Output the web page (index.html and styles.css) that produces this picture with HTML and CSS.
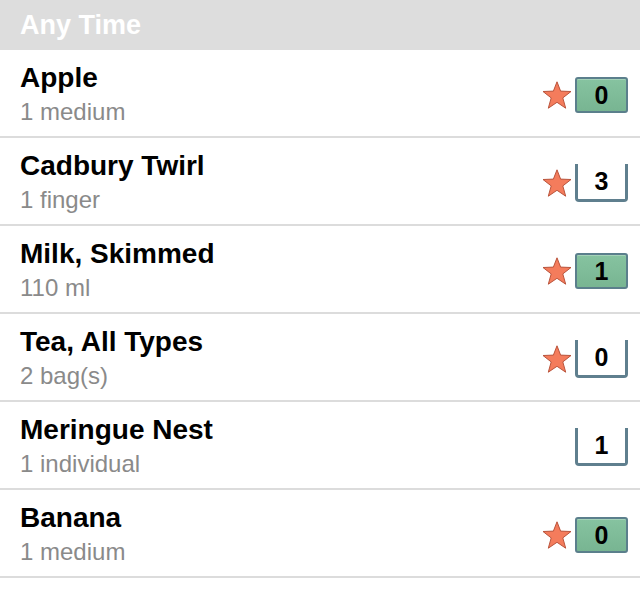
FILE: index.html
```html
<!DOCTYPE html>
<html>
<head>
<meta charset="utf-8">
<link rel="stylesheet" href="styles.css">
</head>
<body>
<div class="list">
  <div class="header">Any Time</div>

  <div class="row">
    <div class="info"><div class="title">Apple</div><div class="sub">1 medium</div></div>
    <div class="controls">
      <svg class="star" viewBox="0 0 30 28"><polygon points="15,0.8 18.6,10.1 29,10.5 20.8,16.9 23.7,27.2 15,21.3 6.3,27.2 9.2,16.9 1,10.5 11.4,10.1"/></svg>
      <div class="box filled">0</div>
    </div>
  </div>

  <div class="row">
    <div class="info"><div class="title">Cadbury Twirl</div><div class="sub">1 finger</div></div>
    <div class="controls">
      <svg class="star" viewBox="0 0 30 28"><polygon points="15,0.8 18.6,10.1 29,10.5 20.8,16.9 23.7,27.2 15,21.3 6.3,27.2 9.2,16.9 1,10.5 11.4,10.1"/></svg>
      <div class="box empty">3</div>
    </div>
  </div>

  <div class="row">
    <div class="info"><div class="title">Milk, Skimmed</div><div class="sub">110 ml</div></div>
    <div class="controls">
      <svg class="star" viewBox="0 0 30 28"><polygon points="15,0.8 18.6,10.1 29,10.5 20.8,16.9 23.7,27.2 15,21.3 6.3,27.2 9.2,16.9 1,10.5 11.4,10.1"/></svg>
      <div class="box filled">1</div>
    </div>
  </div>

  <div class="row">
    <div class="info"><div class="title">Tea, All Types</div><div class="sub">2 bag(s)</div></div>
    <div class="controls">
      <svg class="star" viewBox="0 0 30 28"><polygon points="15,0.8 18.6,10.1 29,10.5 20.8,16.9 23.7,27.2 15,21.3 6.3,27.2 9.2,16.9 1,10.5 11.4,10.1"/></svg>
      <div class="box empty">0</div>
    </div>
  </div>

  <div class="row">
    <div class="info"><div class="title">Meringue Nest</div><div class="sub">1 individual</div></div>
    <div class="controls">
      <div class="box empty">1</div>
    </div>
  </div>

  <div class="row">
    <div class="info"><div class="title">Banana</div><div class="sub">1 medium</div></div>
    <div class="controls">
      <svg class="star" viewBox="0 0 30 28"><polygon points="15,0.8 18.6,10.1 29,10.5 20.8,16.9 23.7,27.2 15,21.3 6.3,27.2 9.2,16.9 1,10.5 11.4,10.1"/></svg>
      <div class="box filled">0</div>
    </div>
  </div>
</div>
</body>
</html>
```

FILE: styles.css
```css
html, body {
  margin: 0;
  padding: 0;
  background: #ffffff;
}
body {
  font-family: "Liberation Sans", Arial, sans-serif;
  width: 640px;
  height: 591px;
  overflow: hidden;
}
.header {
  height: 50px;
  line-height: 50px;
  background: #dddddd;
  color: #ffffff;
  font-weight: bold;
  font-size: 27px;
  padding-left: 20px;
}
.row {
  display: flex;
  align-items: center;
  justify-content: space-between;
  height: 86px;
  border-bottom: 2px solid #dcdcdc;
  padding: 0 12px 0 20px;
}
.info {
  padding-top: 12px;
  padding-bottom: 9px;
  align-self: flex-start;
}
.title {
  font-size: 28px;
  font-weight: bold;
  line-height: 32px;
  color: #000000;
}
.sub {
  font-size: 24px;
  line-height: 30px;
  margin-top: 3px;
  color: #8a8a8a;
}
.controls {
  display: flex;
  align-items: center;
  gap: 3px;
  padding-top: 4px;
}
.star {
  width: 30px;
  height: 28px;
  display: block;
}
.star polygon {
  fill: #f47c5c;
  stroke: #b9543c;
  stroke-width: 1;
  stroke-linejoin: round;
}
.box {
  box-sizing: border-box;
  width: 53px;
  height: 36px;
  display: flex;
  align-items: center;
  justify-content: center;
  font-size: 25px;
  font-weight: bold;
  color: #000000;
}
.box.filled {
  background: linear-gradient(#86c3a0, #78b592);
  border: 2px solid #5b7f8c;
  border-radius: 3px;
  box-shadow: inset 0 1px 0 rgba(255,255,255,0.25);
}
.box.empty {
  height: 38px;
  background: #ffffff;
  border-left: 3px solid #5f7f8e;
  border-right: 3px solid #5f7f8e;
  border-bottom: 3px solid #5f7f8e;
  border-radius: 0 0 4px 4px;
}
```
